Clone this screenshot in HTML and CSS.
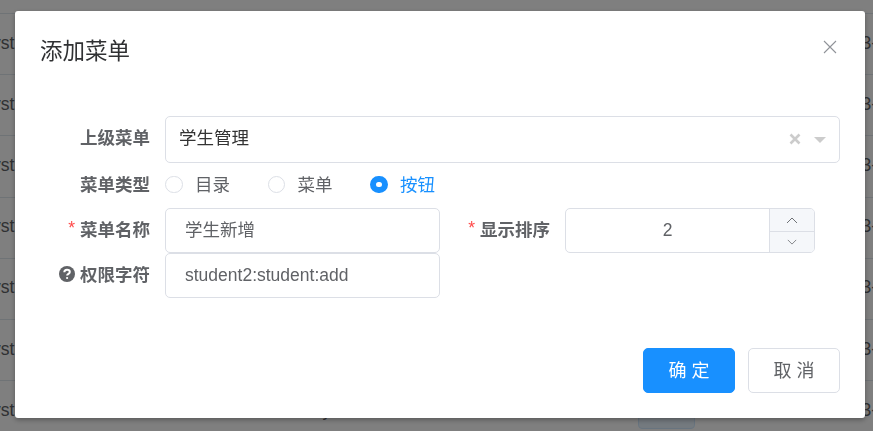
FILE: index.html
```html
<!DOCTYPE html>
<html lang="zh-CN">
<head>
<meta charset="utf-8">
<title>添加菜单</title>
<link rel="stylesheet" href="styles.css">
</head>
<body>
<div class="table">
  <div class="row"><span>yst</span><span>3-</span></div>
  <div class="row"><span>yst</span><span>3-</span></div>
  <div class="row"><span>yst</span><span>3-</span></div>
  <div class="row"><span>yst</span><span>3-</span></div>
  <div class="row"><span>yst</span><span>3-</span></div>
  <div class="row"><span>yst</span><span>3-</span></div>
  <div class="row"><span>yst</span><span class="mid">y</span><span>3-</span></div>
</div>
<div class="under-btn"></div>
<div class="overlay"></div>
<section class="dialog">
  <header class="head">
    <h2 class="title">添加菜单</h2>
    <svg class="close" viewBox="0 0 14 14" aria-hidden="true"><path d="M1 1 L13 13 M13 1 L1 13"/></svg>
  </header>
  <form class="form">
    <div class="item item-tall">
      <label class="label label-high">上级菜单</label>
      <div class="select">
        <span class="select-value">学生管理</span>
        <svg class="clear" viewBox="0 0 12 12" aria-hidden="true"><path d="M1.5 1.5 L10.5 10.5 M10.5 1.5 L1.5 10.5"/></svg>
        <span class="caret"></span>
      </div>
    </div>
    <div class="item">
      <label class="label">菜单类型</label>
      <div class="radios">
        <span class="radio r1"><i class="dot"></i><span class="radio-text">目录</span></span>
        <span class="radio r2"><i class="dot"></i><span class="radio-text">菜单</span></span>
        <span class="radio on"><i class="dot"></i><span class="radio-text">按钮</span></span>
      </div>
    </div>
    <div class="cols">
      <div class="item col">
        <label class="label"><b class="star">*</b>菜单名称</label>
        <div class="input input-cjk">学生新增</div>
      </div>
      <div class="item col">
        <label class="label"><b class="star">*</b>显示排序</label>
        <div class="number">
          <span class="num-value">2</span>
          <div class="steps">
            <span class="step step-up"><svg viewBox="0 0 12 7" aria-hidden="true"><path d="M1 6 L6 1 L11 6"/></svg></span>
            <span class="step step-down"><svg viewBox="0 0 12 7" aria-hidden="true"><path d="M1 1 L6 6 L11 1"/></svg></span>
          </div>
        </div>
      </div>
    </div>
    <div class="cols">
      <div class="item col">
        <label class="label">
          <svg class="help" viewBox="0 0 16 16" aria-hidden="true"><circle cx="8" cy="8" r="8"/><path class="q" d="M5.3 6.3 C5.3 4.6 6.5 3.7 8 3.7 C9.6 3.7 10.8 4.6 10.8 6 C10.8 7.8 8.1 7.9 8.1 9.6"/><circle class="qd" cx="8.1" cy="12" r="1.1"/></svg>权限字符</label>
        <div class="input">student2:student:add</div>
      </div>
    </div>
  </form>
  <footer class="foot">
    <span class="btn primary">确 定</span>
    <span class="btn">取 消</span>
  </footer>
</section>
</body>
</html>
```
FILE: styles.css
```css
* { box-sizing: border-box; }
html, body { margin: 0; height: 100%; overflow: hidden; }
body {
  background: #fff;
  font-family: "Liberation Sans", "Noto Sans CJK SC", sans-serif;
  font-size: 17.5px;
  color: #606266;
}
.table { padding-top: 13px; }
.row {
  height: 61.2px;
  border-top: 1px solid #dfe6ec;
  display: flex;
  justify-content: space-between;
  align-items: center;
  margin: 0 -4px 0 -8px;
  padding-bottom: 2px;
  font-size: 17.5px;
  color: #606266;
}
.mid { margin-left: 308px; margin-right: auto; }
.under-btn {
  position: fixed;
  left: 638px;
  top: 400px;
  width: 57px;
  height: 29px;
  background: #e8f4ff;
  border: 1px solid #d1e9ff;
  border-radius: 4px;
}
.overlay { position: fixed; inset: 0; background: rgba(0, 0, 0, 0.5); }
.dialog {
  position: fixed;
  left: 15px;
  top: 11px;
  width: 850px;
  height: 407px;
  background: #fff;
  border-radius: 3px;
  box-shadow: 0 2px 5px rgba(0, 0, 0, 0.3);
  display: flex;
  flex-direction: column;
}
.head {
  display: flex;
  justify-content: space-between;
  align-items: flex-start;
  padding: 25px 28px 0 25px;
  height: 105px;
}
.title { margin: 0; font-size: 22.5px; font-weight: 400; line-height: 32px; color: #303133; }
.close { width: 14px; height: 14px; margin-top: 4px; fill: none; stroke: #909399; stroke-width: 1.1; }
.form { padding: 0 25px; display: flex; flex-direction: column; }
.item { display: flex; height: 45px; align-items: center; }
.item-tall { height: 47px; }
.label {
  width: 125px;
  flex: none;
  padding-right: 15px;
  padding-bottom: 4px;
  text-align: right;
  font-weight: 700;
  color: #606266;
  white-space: nowrap;
  display: flex;
  justify-content: flex-end;
  align-items: center;
}
.label-high { padding-bottom: 6px; }
.star { color: #ff4949; font-weight: 400; margin-right: 5px; font-size: 17.5px; }
.help { width: 16px; height: 16px; margin-right: 5px; fill: #606266; }
.help .q { fill: none; stroke: #fff; stroke-width: 2; }
.help .qd { fill: #fff; }
.select {
  flex: 1;
  height: 47px;
  border: 1px solid #dcdfe6;
  border-radius: 5px;
  display: flex;
  align-items: center;
  padding: 0 13px 0 13px;
  color: #333;
}
.select-value { flex: 1; padding-bottom: 6px; }
.clear { width: 12px; height: 12px; fill: none; stroke: #ccc; stroke-width: 2.6; margin-right: 13px; margin-bottom: 1px; }
.caret {
  width: 0;
  height: 0;
  border-left: 6px solid transparent;
  border-right: 6px solid transparent;
  border-top: 6px solid #ccc;
}
.radios { display: flex; align-items: center; padding-bottom: 2px; }
.radio { display: flex; align-items: center; white-space: nowrap; }
.radio-text { padding-bottom: 2px; }
.r1 { margin-right: 37.5px; }
.r2 { margin-right: 37.5px; }
.dot {
  width: 17.5px;
  height: 17.5px;
  border: 1px solid #dcdfe6;
  border-radius: 50%;
  margin-right: 12.5px;
  flex: none;
}
.radio.on { color: #1890ff; }
.radio.on .dot { border: 6px solid #1890ff; background: #fff; }
.cols { display: flex; }
.col { width: 400px; }
.input {
  width: 275px;
  height: 45px;
  border: 1px solid #dcdfe6;
  border-radius: 5px;
  padding: 0 19px;
  display: flex;
  align-items: center;
}
.input-cjk { padding-bottom: 4px; }
.number {
  width: 250px;
  height: 45px;
  border: 1px solid #dcdfe6;
  border-radius: 5px;
  display: flex;
  overflow: hidden;
}
.num-value { flex: 1; display: flex; align-items: center; justify-content: center; }
.steps { width: 45px; flex: none; display: flex; flex-direction: column; border-left: 1px solid #dcdfe6; background: #f5f7fa; }
.step { display: flex; align-items: center; justify-content: center; }
.step-up { height: 22px; flex: none; }
.step-down { flex: 1; border-top: 1px solid #dcdfe6; }
.step svg { width: 12px; height: 7px; fill: none; stroke: #606266; stroke-width: 0.9; }
.step-down svg { width: 10px; height: 6px; }
.foot {
  margin-top: auto;
  padding: 0 25px 25px 0;
  display: flex;
  justify-content: flex-end;
  gap: 13px;
}
.btn {
  width: 92px;
  height: 45px;
  border: 1px solid #dcdfe6;
  border-radius: 5px;
  display: flex;
  align-items: center;
  justify-content: center;
  padding-bottom: 4px;
  color: #606266;
  font-size: 18px;
  white-space: pre;
}
.primary { background: #1890ff; border-color: #1890ff; color: #fff; }
```
